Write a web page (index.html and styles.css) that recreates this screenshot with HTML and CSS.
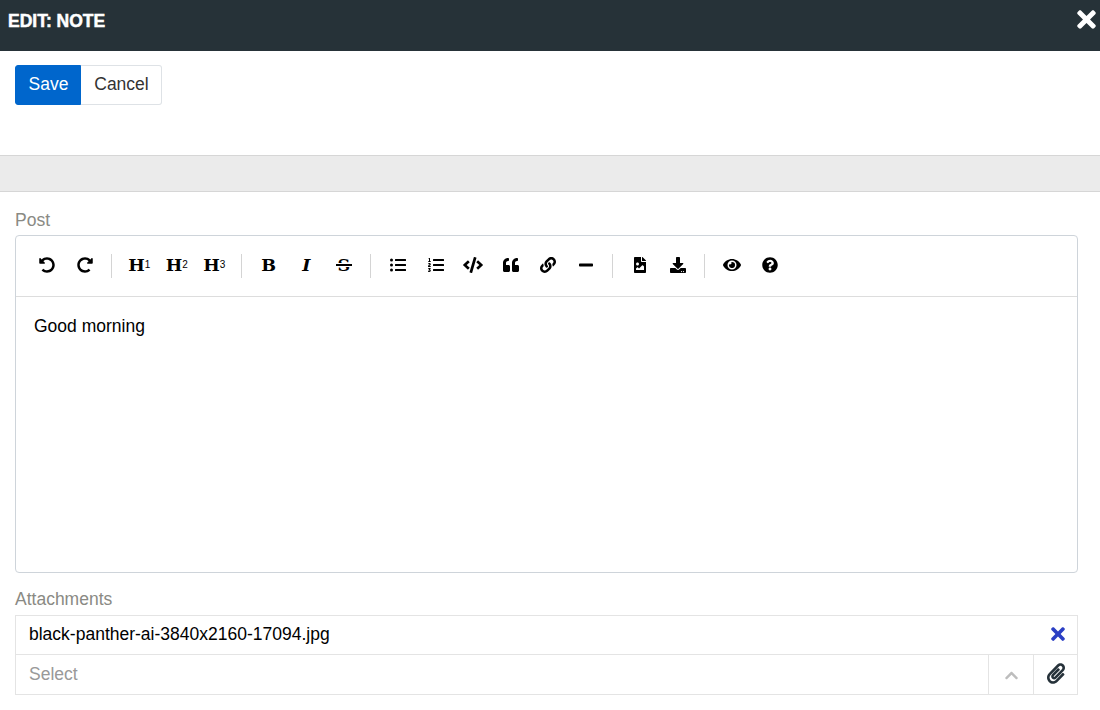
FILE: index.html
```html
<!DOCTYPE html>
<html lang="en">
<head>
<meta charset="utf-8">
<title>Edit: Note</title>
<link rel="stylesheet" href="styles.css">
</head>
<body>
<header class="topbar">
  <span class="title">EDIT: NOTE</span>
  <svg class="close" viewBox="0 0 352 512"><path fill="#fff" d="M242.72 256l100.07-100.07c12.28-12.28 12.28-32.19 0-44.48l-22.24-22.24c-12.28-12.28-32.19-12.28-44.48 0L176 189.28 75.93 89.21c-12.28-12.28-32.19-12.28-44.48 0L9.21 111.45c-12.28 12.28-12.28 32.19 0 44.48L109.28 256 9.21 356.07c-12.28 12.28-12.28 32.19 0 44.48l22.24 22.24c12.28 12.28 32.2 12.28 44.48 0L176 322.72l100.07 100.07c12.28 12.28 32.2 12.28 44.48 0l22.24-22.24c12.28-12.28 12.28-32.19 0-44.48L242.72 256z"/></svg>
</header>
<div class="actions">
  <button class="btn save">Save</button><button class="btn cancel">Cancel</button>
</div>
<div class="band"></div>
<main class="form">
  <div class="label">Post</div>
  <section class="editor">
    <div class="toolbar">
      <span class="group">
        <span class="tool"><svg viewBox="0 0 512 512"><path d="M255.545 8c-66.269.119-126.438 26.233-170.86 68.685L48.971 40.971C33.851 25.851 8 36.559 8 57.941V192c0 13.255 10.745 24 24 24h134.059c21.382 0 32.09-25.851 16.971-40.971l-41.75-41.75c30.864-28.899 70.801-44.907 113.23-45.273 92.398-.798 170.283 73.977 169.484 169.442C423.236 348.009 349.816 424 256 424c-41.127 0-79.997-14.678-110.63-41.556-4.743-4.161-11.906-3.908-16.368.553L89.34 422.659c-4.872 4.872-4.631 12.815.482 17.433C133.798 479.813 192.074 504 256 504c136.966 0 247.999-111.033 248-247.998C504.001 119.193 392.354 7.755 255.545 8z"/></svg></span>
        <span class="tool"><svg class="flip" viewBox="0 0 512 512"><path d="M255.545 8c-66.269.119-126.438 26.233-170.86 68.685L48.971 40.971C33.851 25.851 8 36.559 8 57.941V192c0 13.255 10.745 24 24 24h134.059c21.382 0 32.09-25.851 16.971-40.971l-41.75-41.75c30.864-28.899 70.801-44.907 113.23-45.273 92.398-.798 170.283 73.977 169.484 169.442C423.236 348.009 349.816 424 256 424c-41.127 0-79.997-14.678-110.63-41.556-4.743-4.161-11.906-3.908-16.368.553L89.34 422.659c-4.872 4.872-4.631 12.815.482 17.433C133.798 479.813 192.074 504 256 504c136.966 0 247.999-111.033 248-247.998C504.001 119.193 392.354 7.755 255.545 8z"/></svg></span>
      </span>
      <span class="group">
        <span class="tool head">H<sub>1</sub></span>
        <span class="tool head">H<sub>2</sub></span>
        <span class="tool head">H<sub>3</sub></span>
      </span>
      <span class="group">
        <span class="tool head">B</span>
        <span class="tool head ital">I</span>
        <span class="tool head strike">S</span>
      </span>
      <span class="group">
        <span class="tool"><svg viewBox="0 0 512 512"><path d="M48 48a48 48 0 1 0 48 48 48 48 0 0 0-48-48zm0 160a48 48 0 1 0 48 48 48 48 0 0 0-48-48zm0 160a48 48 0 1 0 48 48 48 48 0 0 0-48-48zm448 16H176a16 16 0 0 0-16 16v32a16 16 0 0 0 16 16h320a16 16 0 0 0 16-16v-32a16 16 0 0 0-16-16zm0-320H176a16 16 0 0 0-16 16v32a16 16 0 0 0 16 16h320a16 16 0 0 0 16-16V80a16 16 0 0 0-16-16zm0 160H176a16 16 0 0 0-16 16v32a16 16 0 0 0 16 16h320a16 16 0 0 0 16-16v-32a16 16 0 0 0-16-16z"/></svg></span>
        <span class="tool"><svg viewBox="0 0 512 512"><path d="M61.77 401l17.5-20.15a19.92 19.92 0 0 0 5.07-14.19v-3.31C84.34 356 80.5 352 73 352H16a8 8 0 0 0-8 8v16a8 8 0 0 0 8 8h22.83a157.41 157.41 0 0 0-11 12.31l-5.61 7c-4 5.07-5.25 10.13-2.8 14.88l1.05 1.93c3 5.76 6.29 7.88 12.25 7.88h4.73c10.33 0 15.94 2.44 15.94 9.09 0 4.72-4.2 8.22-14.36 8.22a41.54 41.54 0 0 1-15.47-3.12c-6.49-3.88-11.74-3.5-15.6 3.12l-5.59 9.31c-3.72 6.13-3.19 11.72 2.63 15.94 7.71 4.69 20.38 9.44 37 9.44 34.16 0 48.5-22.75 48.5-44.12-.03-14.38-9.12-29.76-28.73-34.88zM496 224H176a16 16 0 0 0-16 16v32a16 16 0 0 0 16 16h320a16 16 0 0 0 16-16v-32a16 16 0 0 0-16-16zm0-160H176a16 16 0 0 0-16 16v32a16 16 0 0 0 16 16h320a16 16 0 0 0 16-16V80a16 16 0 0 0-16-16zm0 320H176a16 16 0 0 0-16 16v32a16 16 0 0 0 16 16h320a16 16 0 0 0 16-16v-32a16 16 0 0 0-16-16zM16 160h64a8 8 0 0 0 8-8v-16a8 8 0 0 0-8-8H64V40a8 8 0 0 0-8-8H32a8 8 0 0 0-7.14 4.42l-8 16A8 8 0 0 0 24 64h8v64H16a8 8 0 0 0-8 8v16a8 8 0 0 0 8 8zm-3.91 160H80a8 8 0 0 0 8-8v-16a8 8 0 0 0-8-8H41.32c3.29-10.29 48.34-18.68 48.34-56.44 0-29.06-25-39.56-44.47-39.56-21.36 0-33.8 10-40.46 18.75-4.37 5.59-3 10.84 2.8 15.37l8.58 6.88c5.61 4.56 11 2.47 16.12-2.44a13.44 13.44 0 0 1 9.46-3.84c3.33 0 9.28 1.56 9.28 8.75C51 248.19 0 257.31 0 304.59v4C0 316 5.08 320 12.09 320z"/></svg></span>
        <span class="tool"><svg class="wide" viewBox="0 0 640 512"><path d="M278.9 511.5l-61-17.7c-6.4-1.8-10-8.5-8.2-14.9L346.2 8.7c1.8-6.4 8.5-10 14.9-8.2l61 17.7c6.4 1.8 10 8.5 8.2 14.9L293.8 503.3c-1.9 6.4-8.5 10.1-14.9 8.2zm-114-112.2l43.5-46.4c4.6-4.9 4.3-12.7-.8-17.2L117 256l90.6-79.7c5.1-4.5 5.5-12.3.8-17.2l-43.5-46.4c-4.5-4.8-12.1-5.1-17-.5L3.8 247.2c-5.1 4.7-5.1 12.8 0 17.5l144.1 135.1c4.9 4.6 12.5 4.4 17-.5zm327.2.6l144.1-135.1c5.1-4.7 5.1-12.8 0-17.5L492.1 112.1c-4.8-4.5-12.4-4.3-17 .5L431.6 159c-4.6 4.9-4.3 12.7.8 17.2L523 256l-90.6 79.7c-5.1 4.5-5.5 12.3-.8 17.2l43.5 46.4c4.5 4.9 12.1 5.1 17 .6z"/></svg></span>
        <span class="tool"><svg viewBox="0 0 512 512"><path d="M464 256h-80v-64c0-35.3 28.7-64 64-64h8c13.3 0 24-10.7 24-24V56c0-13.3-10.7-24-24-24h-8c-88.4 0-160 71.6-160 160v240c0 26.5 21.5 48 48 48h128c26.5 0 48-21.5 48-48V304c0-26.5-21.5-48-48-48zm-288 0H96v-64c0-35.3 28.7-64 64-64h8c13.3 0 24-10.7 24-24V56c0-13.3-10.7-24-24-24h-8C71.6 32 0 103.6 0 192v240c0 26.5 21.5 48 48 48h128c26.5 0 48-21.5 48-48V304c0-26.5-21.5-48-48-48z"/></svg></span>
        <span class="tool"><svg viewBox="0 0 512 512"><path d="M326.612 185.391c59.747 59.809 58.927 155.698.36 214.59-.11.12-.24.25-.36.37l-67.2 67.2c-59.27 59.27-155.699 59.262-214.96 0-59.27-59.26-59.27-155.7 0-214.96l37.106-37.106c9.84-9.84 26.786-3.3 27.294 10.606.648 17.722 3.826 35.527 9.69 52.721 1.986 5.822.567 12.262-3.783 16.612l-13.087 13.087c-28.026 28.026-28.905 73.66-1.155 101.96 28.024 28.579 74.086 28.749 102.325.51l67.2-67.19c28.191-28.191 28.073-73.757 0-101.83-3.701-3.694-7.429-6.564-10.341-8.569a16.037 16.037 0 0 1-6.947-12.606c-.396-10.567 3.348-21.456 11.698-29.806l21.054-21.055c5.521-5.521 14.182-6.199 20.584-1.731a152.482 152.482 0 0 1 20.522 17.197zM467.547 44.449c-59.261-59.262-155.69-59.27-214.96 0l-67.2 67.2c-.12.12-.25.25-.36.37-58.566 58.892-59.387 154.781.36 214.59a152.454 152.454 0 0 0 20.521 17.196c6.402 4.468 15.064 3.789 20.584-1.731l21.054-21.055c8.35-8.35 12.094-19.239 11.698-29.806a16.037 16.037 0 0 0-6.947-12.606c-2.912-2.005-6.64-4.875-10.341-8.569-28.073-28.073-28.191-73.639 0-101.83l67.2-67.19c28.239-28.239 74.3-28.069 102.325.51 27.75 28.3 26.872 73.934-1.155 101.96l-13.087 13.087c-4.35 4.35-5.769 10.79-3.783 16.612 5.864 17.194 9.042 34.999 9.69 52.721.509 13.906 17.454 20.446 27.294 10.606l37.106-37.106c59.271-59.259 59.271-155.699.001-214.959z"/></svg></span>
        <span class="tool"><svg viewBox="0 0 448 512"><path d="M416 208H32c-17.67 0-32 14.33-32 32v32c0 17.67 14.33 32 32 32h384c17.67 0 32-14.33 32-32v-32c0-17.67-14.33-32-32-32z"/></svg></span>
      </span>
      <span class="group">
        <span class="tool"><svg viewBox="0 0 384 512"><path d="M384 121.941V128H256V0h6.059a24 24 0 0 1 16.97 7.029l97.941 97.941a24.002 24.002 0 0 1 7.03 16.971zM248 160c-13.2 0-24-10.8-24-24V0H24C10.745 0 0 10.745 0 24v464c0 13.255 10.745 24 24 24h336c13.255 0 24-10.745 24-24V160H248zm-135.455 16c26.51 0 48 21.49 48 48s-21.49 48-48 48-48-21.49-48-48 21.491-48 48-48zm208 240h-256l.485-48.485L104.545 328c4.686-4.686 11.799-4.201 16.485.485L160.545 368 264.06 264.485c4.686-4.686 12.284-4.686 16.971 0L320.545 304v112z"/></svg></span>
        <span class="tool"><svg viewBox="0 0 512 512"><path d="M216 0h80c13.3 0 24 10.7 24 24v168h87.7c17.8 0 26.7 21.5 14.1 34.1L269.7 378.3c-7.5 7.5-19.8 7.5-27.3 0L90.1 226.1c-12.6-12.6-3.7-34.1 14.1-34.1H192V24c0-13.3 10.7-24 24-24zm296 376v112c0 13.3-10.7 24-24 24H24c-13.3 0-24-10.7-24-24V376c0-13.3 10.7-24 24-24h146.7l49 49c20.1 20.1 52.5 20.1 72.6 0l49-49H488c13.3 0 24 10.7 24 24zm-124 88c0-11-9-20-20-20s-20 9-20 20 9 20 20 20 20-9 20-20zm64 0c0-11-9-20-20-20s-20 9-20 20 9 20 20 20 20-9 20-20z"/></svg></span>
      </span>
      <span class="group last">
        <span class="tool"><svg class="eye" viewBox="0 0 576 512"><path d="M572.52 241.4C518.29 135.59 410.93 64 288 64S57.68 135.64 3.48 241.41a32.35 32.35 0 0 0 0 29.19C57.71 376.41 165.07 448 288 448s230.32-71.64 284.52-177.41a32.35 32.35 0 0 0 0-29.19zM288 400a144 144 0 1 1 144-144 143.93 143.93 0 0 1-144 144zm0-240a95.31 95.31 0 0 0-25.31 3.79 47.85 47.85 0 0 1-66.9 66.9A95.78 95.78 0 1 0 288 160z"/></svg></span>
        <span class="tool"><svg viewBox="0 0 512 512"><path d="M504 256c0 136.997-111.043 248-248 248S8 392.997 8 256C8 119.083 119.043 8 256 8s248 111.083 248 248zM262.655 90c-54.497 0-89.255 22.957-116.549 63.758-3.536 5.286-2.353 12.415 2.715 16.258l34.699 26.31c5.205 3.947 12.621 3.008 16.665-2.122 17.864-22.658 30.113-35.797 57.303-35.797 20.429 0 45.698 13.148 45.698 32.958 0 14.976-12.363 22.667-32.534 33.976C247.128 238.528 216 254.941 216 296v4c0 6.627 5.373 12 12 12h56c6.627 0 12-5.373 12-12v-1.333c0-28.462 83.186-29.647 83.186-106.667 0-58.002-60.165-102-116.531-102zM256 338c-25.365 0-46 20.635-46 46 0 25.364 20.635 46 46 46s46-20.636 46-46c0-25.365-20.635-46-46-46z"/></svg></span>
      </span>
    </div>
    <div class="content">Good morning</div>
  </section>
  <div class="label attach-label">Attachments</div>
  <div class="attachments">
    <div class="file">
      <span class="filename">black-panther-ai-3840x2160-17094.jpg</span>
      <svg class="remove" viewBox="0 0 352 512"><path fill="#2b3fc4" d="M242.72 256l100.07-100.07c12.28-12.28 12.28-32.19 0-44.48l-22.24-22.24c-12.28-12.28-32.19-12.28-44.48 0L176 189.28 75.93 89.21c-12.28-12.28-32.19-12.28-44.48 0L9.21 111.45c-12.28 12.28-12.28 32.19 0 44.48L109.28 256 9.21 356.07c-12.28 12.28-12.28 32.19 0 44.48l22.24 22.24c12.28 12.28 32.2 12.28 44.48 0L176 322.72l100.07 100.07c12.28 12.28 32.2 12.28 44.48 0l22.24-22.24c12.28-12.28 12.28-32.19 0-44.48L242.72 256z"/></svg>
    </div>
    <div class="picker">
      <span class="select">Select</span>
      <span class="cell"><svg class="chev" viewBox="0 0 448 512"><path fill="#bdbdbd" d="M240.971 130.524l194.343 194.343c9.373 9.373 9.373 24.569 0 33.941l-22.667 22.667c-9.357 9.357-24.522 9.375-33.901.04L224 227.495 69.255 381.516c-9.379 9.335-24.544 9.317-33.901-.04l-22.667-22.667c-9.373-9.373-9.373-24.569 0-33.941L207.03 130.525c9.372-9.373 24.568-9.373 33.941-.001z"/></svg></span>
      <span class="cell"><svg class="clip" viewBox="0 0 448 512"><path fill="#26323a" d="M43.246 466.142c-58.43-60.289-57.341-157.511 1.386-217.581L254.392 34c44.316-45.332 116.351-45.336 160.671 0 43.89 44.894 43.943 117.329 0 162.276L232.214 383.128c-29.855 30.537-78.633 30.111-107.982-.998-28.275-29.97-27.368-77.473 1.452-106.953l143.743-146.835c6.182-6.314 16.312-6.422 22.626-.241l22.861 22.379c6.315 6.182 6.422 16.312.241 22.626L171.427 319.927c-4.932 5.045-5.236 13.428-.648 18.292 4.372 4.634 11.245 4.711 15.688.165l182.849-186.851c19.613-20.062 19.613-52.725-.011-72.798-19.189-19.627-49.957-19.637-69.154 0L90.39 293.295c-34.763 35.56-35.299 93.12-1.191 128.313 34.01 35.093 88.985 35.137 123.058.286l172.06-175.999c6.177-6.319 16.307-6.433 22.626-.256l22.877 22.364c6.319 6.177 6.433 16.307.256 22.626l-172.06 175.998c-59.576 60.938-155.943 60.216-214.77-.485z"/></svg></span>
    </div>
  </div>
</main>
</body>
</html>
```
FILE: styles.css
```css
* { box-sizing: border-box; }
html, body { margin: 0; padding: 0; }
body { width: 1100px; height: 710px; overflow: hidden; background: #fff; font-family: "Liberation Sans", Arial, sans-serif; font-size: 17.5px; color: #000; }
.topbar { height: 51px; background: #263238; display: flex; justify-content: space-between; padding: 8px 4px 0 8px; align-items: flex-start; }
.title { color: #fff; font-weight: 700; font-size: 17.5px; line-height: 26px; -webkit-text-stroke: .5px #fff; }
.close { width: 19px; height: 27px; margin-top: -2px; }
.actions { height: 104px; padding: 14px 15px 0; display: flex; align-items: flex-start; }
.btn { height: 40px; font: 17.5px "Liberation Sans", Arial, sans-serif; border: 1px solid; padding: 0 0 2px 1px; }
.save { width: 66px; background: #0066cc; border-color: #0066cc; color: #fff; border-radius: 3px 0 0 3px; }
.cancel { width: 81px; background: #fff; border-color: #dee2e6; border-left: 0; color: #333; border-radius: 0 3px 3px 0; }
.band { height: 37px; background: #ebebeb; border-top: 1px solid #d6d6d6; border-bottom: 1px solid #d6d6d6; }
.form { padding: 17px 22px 0 15px; }
.label { color: #8a8a84; font-size: 17.5px; line-height: 22px; margin-bottom: 4px; }
.editor { height: 338px; border: 1px solid #ced4da; border-radius: 4px; }
.toolbar { height: 61px; border-bottom: 1px solid #ddd; display: flex; align-items: center; padding: 0 12px; }
.group { display: flex; align-items: center; padding-right: 8px; margin-right: 8px; height: 24px; border-right: 1px solid #d4d4d4; }
.group.last { border-right: 0; }
.tool { position: relative; width: 37.5px; height: 24px; padding: 0 0 2px 1px; display: flex; align-items: center; justify-content: center; }
.tool svg { width: 16px; height: 16px; display: block; }
.tool svg.wide { width: 20px; }
.tool svg.eye { width: 18px; height: 18px; }
.tool svg.flip { transform: scaleX(-1); }
.head { font: 700 17.5px "DejaVu Serif", "Liberation Serif", serif; }
.head sub { font: 400 10px "Liberation Sans", Arial, sans-serif; line-height: 0; vertical-align: -4px; }
.ital { font-style: italic; }
.strike::after { content: ""; position: absolute; left: 11px; right: 10px; top: 10px; height: 2px; background: #000; box-shadow: 0 1px #fff, 0 -1px #fff; }
.content { padding: 18px; line-height: 22px; }
.attach-label { margin-top: 15px; margin-bottom: 5px; }
.attachments { border: 1px solid #e4e4e4; }
.file { height: 39px; display: flex; align-items: center; justify-content: space-between; padding: 0 12px 2px 13px; border-bottom: 1px solid #e4e4e4; }
.remove { width: 14px; height: 20px; }
.picker { height: 39px; display: flex; align-items: stretch; }
.select { flex: 1; color: #999; padding-left: 13px; line-height: 39px; }
.cell { width: 44.5px; border-left: 1px solid #e4e4e4; display: flex; align-items: center; justify-content: center; }
.chev { width: 13px; height: 15px; margin: 1px 0 0 2px; }
.clip { width: 18px; height: 21px; margin: -3px 0 0 1px; }
```
